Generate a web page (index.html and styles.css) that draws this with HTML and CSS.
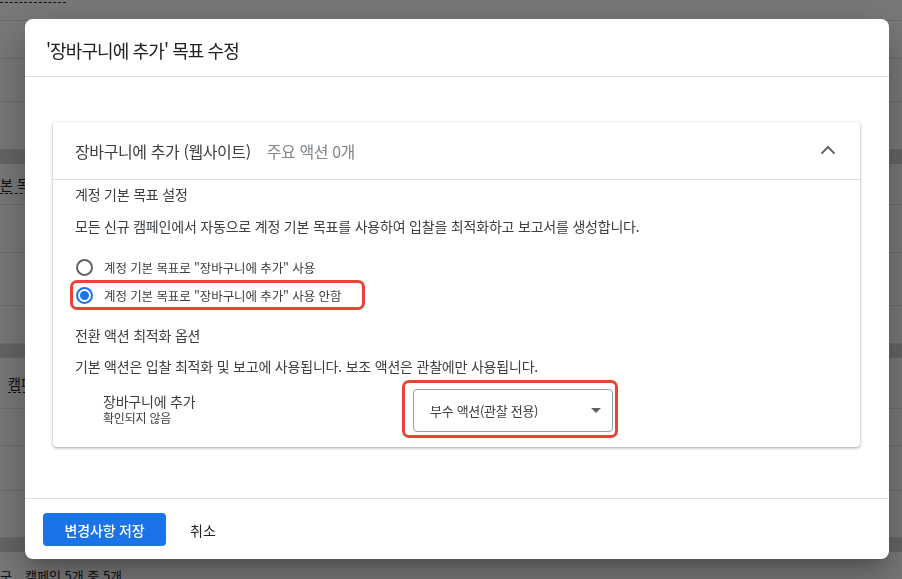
FILE: index.html
```html
<!DOCTYPE html>
<html lang="ko">
<head>
    <meta charset="UTF-8">
    <meta name="viewport" content="width=device-width, initial-scale=1.0">
    <title>목표 수정</title>
    <link rel="stylesheet" href="styles.css">
</head>
<body>
    <!-- page behind the dialog -->
    <div class="page">
        <div class="page-row" style="height: 19px"><span class="dashed-top"></span></div>
        <div class="page-row" style="height: 38px"></div>
        <div class="page-row" style="height: 43px"></div>
        <div class="page-row" style="height: 48px"></div>
        <div class="page-band"></div>
        <div class="page-row page-text" style="height: 41px"><span class="dotted">본 목표 설정</span></div>
        <div class="page-row" style="height: 48px"></div>
        <div class="page-row" style="height: 53px"></div>
        <div class="page-row" style="height: 38px"></div>
        <div class="page-band"></div>
        <div class="page-row page-text indent" style="height: 51px"><span class="dotted">캠페인 목표</span></div>
        <div class="page-row" style="height: 37px"></div>
        <div class="page-row" style="height: 45px"></div>
        <div class="page-row" style="height: 47px"></div>
        <div class="page-band"></div>
        <div class="page-footer"><span>구</span><span>캠페인 5개 중 5개</span></div>
    </div>

    <div class="overlay">
        <div class="dialog">
            <div class="dialog-header">
                <h1 class="dialog-title">'장바구니에 추가' 목표 수정</h1>
            </div>

            <div class="dialog-content">
                <div class="card">
                    <div class="card-header">
                        <span class="card-title">장바구니에 추가 (웹사이트)</span>
                        <span class="card-meta">주요 액션 0개</span>
                        <svg class="chevron" width="16" height="10" viewBox="0 0 16 10">
                            <polyline points="1.5,8.6 8,2 14.5,8.6" fill="none" stroke="#5f6368" stroke-width="2"/>
                        </svg>
                    </div>

                    <div class="card-body">
                        <div class="section-title">계정 기본 목표 설정</div>
                        <p class="section-desc">모든 신규 캠페인에서 자동으로 계정 기본 목표를 사용하여 입찰을 최적화하고 보고서를 생성합니다.</p>

                        <div class="radio-group">
                            <label class="radio-row">
                                <span class="radio"></span>
                                <span>계정 기본 목표로 "장바구니에 추가" 사용</span>
                            </label>
                            <label class="radio-row highlight">
                                <span class="radio checked"></span>
                                <span>계정 기본 목표로 "장바구니에 추가" 사용 안함</span>
                            </label>
                        </div>

                        <div class="section-title second">전환 액션 최적화 옵션</div>
                        <p class="section-desc tight">기본 액션은 입찰 최적화 및 보고에 사용됩니다. 보조 액션은 관찰에만 사용됩니다.</p>

                        <div class="action-row">
                            <div class="action-name">
                                <div class="action-label">장바구니에 추가</div>
                                <div class="action-status">확인되지 않음</div>
                            </div>
                            <div class="select-wrap highlight">
                                <div class="select">
                                    <span>부수 액션(관찰 전용)</span>
                                    <span class="caret"></span>
                                </div>
                            </div>
                        </div>
                    </div>
                </div>
            </div>

            <div class="dialog-footer">
                <button class="btn-primary">변경사항 저장</button>
                <button class="btn-text">취소</button>
            </div>
        </div>
    </div>
</body>
</html>
```

FILE: styles.css
```css
body {
    margin: 0;
    font-family: "Noto Sans CJK KR", "Noto Sans", sans-serif;
    color: #3c4043;
    background: #fff;
    overflow: hidden;
}

/* background page */
.page {
    width: 902px;
    height: 579px;
}

.page-row {
    box-sizing: border-box;
    border-bottom: 1px solid #e3e3e3;
}

.page-band {
    height: 14px;
    background: #d6d6d6;
}

.page-text {
    display: flex;
    align-items: center;
    font-size: 14px;
    color: #202124;
}

.page-text.indent {
    padding-left: 8px;
}

.dotted {
    border-bottom: 1px dashed #202124;
    line-height: 18px;
}

.dashed-top {
    display: block;
    width: 66px;
    margin-top: 2px;
    border-top: 1px dashed #202124;
}

.page-footer {
    display: flex;
    gap: 13px;
    font-size: 13px;
    line-height: 16px;
    color: #202124;
    padding-top: 16px;
}

/* dialog */
.overlay {
    position: fixed;
    top: 0;
    left: 0;
    right: 0;
    bottom: 0;
    background: rgba(0, 0, 0, 0.53);
}

.dialog {
    margin: 19px 0 0 25px;
    width: 864px;
    height: 540px;
    background: #fff;
    border-radius: 8px;
    display: flex;
    flex-direction: column;
    box-shadow: 0 11px 15px -7px rgba(0, 0, 0, 0.2), 0 24px 38px 3px rgba(0, 0, 0, 0.14), 0 9px 46px 8px rgba(0, 0, 0, 0.12);
}

.dialog-header {
    padding: 19px 21px 14px;
    border-bottom: 1px solid #e0e0e0;
}

.dialog-title {
    margin: 0;
    font-size: 18px;
    font-weight: 400;
    line-height: 24px;
    letter-spacing: -0.9px;
    color: #202124;
}

.dialog-content {
    flex: 1;
    padding: 45px 29px 0 28px;
}

.card {
    border-radius: 4px;
    box-shadow: 0 1px 2px 0 rgba(60, 64, 67, 0.3), 0 1px 3px 1px rgba(60, 64, 67, 0.15);
}

.card-header {
    height: 57px;
    display: flex;
    align-items: center;
    padding: 0 24px 0 22px;
    border-bottom: 1px solid #e0e0e0;
    font-size: 16px;
    letter-spacing: -0.4px;
}

.card-meta {
    margin-left: 16px;
    color: #80868b;
}

.chevron {
    margin-left: auto;
    margin-top: -1px;
}

.card-body {
    padding: 4px 22px 12px;
    letter-spacing: -0.2px;
}

.section-title {
    font-size: 14px;
    line-height: 20px;
    color: #3c4043;
}

.section-title.second {
    margin-top: 18px;
}

.section-desc {
    margin: 12px 0 19px;
    font-size: 14px;
    line-height: 20px;
}

.section-desc.tight {
    margin: 11px 0 7px;
}

.radio-group {
    display: flex;
    flex-direction: column;
    gap: 4px;
}

.radio-row {
    display: flex;
    align-items: center;
    gap: 11px;
    width: fit-content;
    height: 24px;
    margin-left: -2px;
    padding: 0 21px 0 3px;
    font-size: 12.5px;
    letter-spacing: -0.1px;
    color: #3c4043;
}

.radio {
    box-sizing: border-box;
    width: 17px;
    height: 17px;
    border: 2px solid #5f6368;
    border-radius: 50%;
    display: flex;
    align-items: center;
    justify-content: center;
}

.radio.checked {
    border-color: #1a73e8;
}

.radio.checked::after {
    content: "";
    width: 9px;
    height: 9px;
    border-radius: 50%;
    background: #1a73e8;
}

.highlight {
    outline: 3px solid #ea4335;
    border-radius: 4px;
}

.action-row {
    display: flex;
    align-items: center;
    padding-left: 28px;
}

.action-name {
    width: 302px;
}

.action-label {
    font-size: 14px;
    line-height: 18px;
}

.action-status {
    font-size: 12px;
    line-height: 16px;
}

.select-wrap {
    padding: 6px 2px 3px 8px;
}

.select {
    box-sizing: border-box;
    width: 200px;
    height: 43px;
    border: 1px solid #9aa0a6;
    border-radius: 4px;
    display: flex;
    align-items: center;
    justify-content: space-between;
    padding: 0 11px 0 16px;
    font-size: 13px;
    letter-spacing: -0.3px;
    color: #3c4043;
}

.caret {
    width: 0;
    height: 0;
    border-left: 5px solid transparent;
    border-right: 5px solid transparent;
    border-top: 5px solid #5f6368;
}

.dialog-footer {
    border-top: 1px solid #e0e0e0;
    padding: 14px 18px 13px;
    display: flex;
    align-items: center;
}

.btn-primary {
    width: 123px;
    height: 33px;
    border: none;
    border-radius: 4px;
    background: #1a73e8;
    color: #fff;
    font-family: inherit;
    font-size: 14px;
    font-weight: 500;
    letter-spacing: -0.2px;
    cursor: pointer;
}

.btn-text {
    margin-left: 24px;
    padding: 0;
    border: none;
    background: none;
    color: #202124;
    font-family: inherit;
    font-size: 14px;
    cursor: pointer;
}
```
